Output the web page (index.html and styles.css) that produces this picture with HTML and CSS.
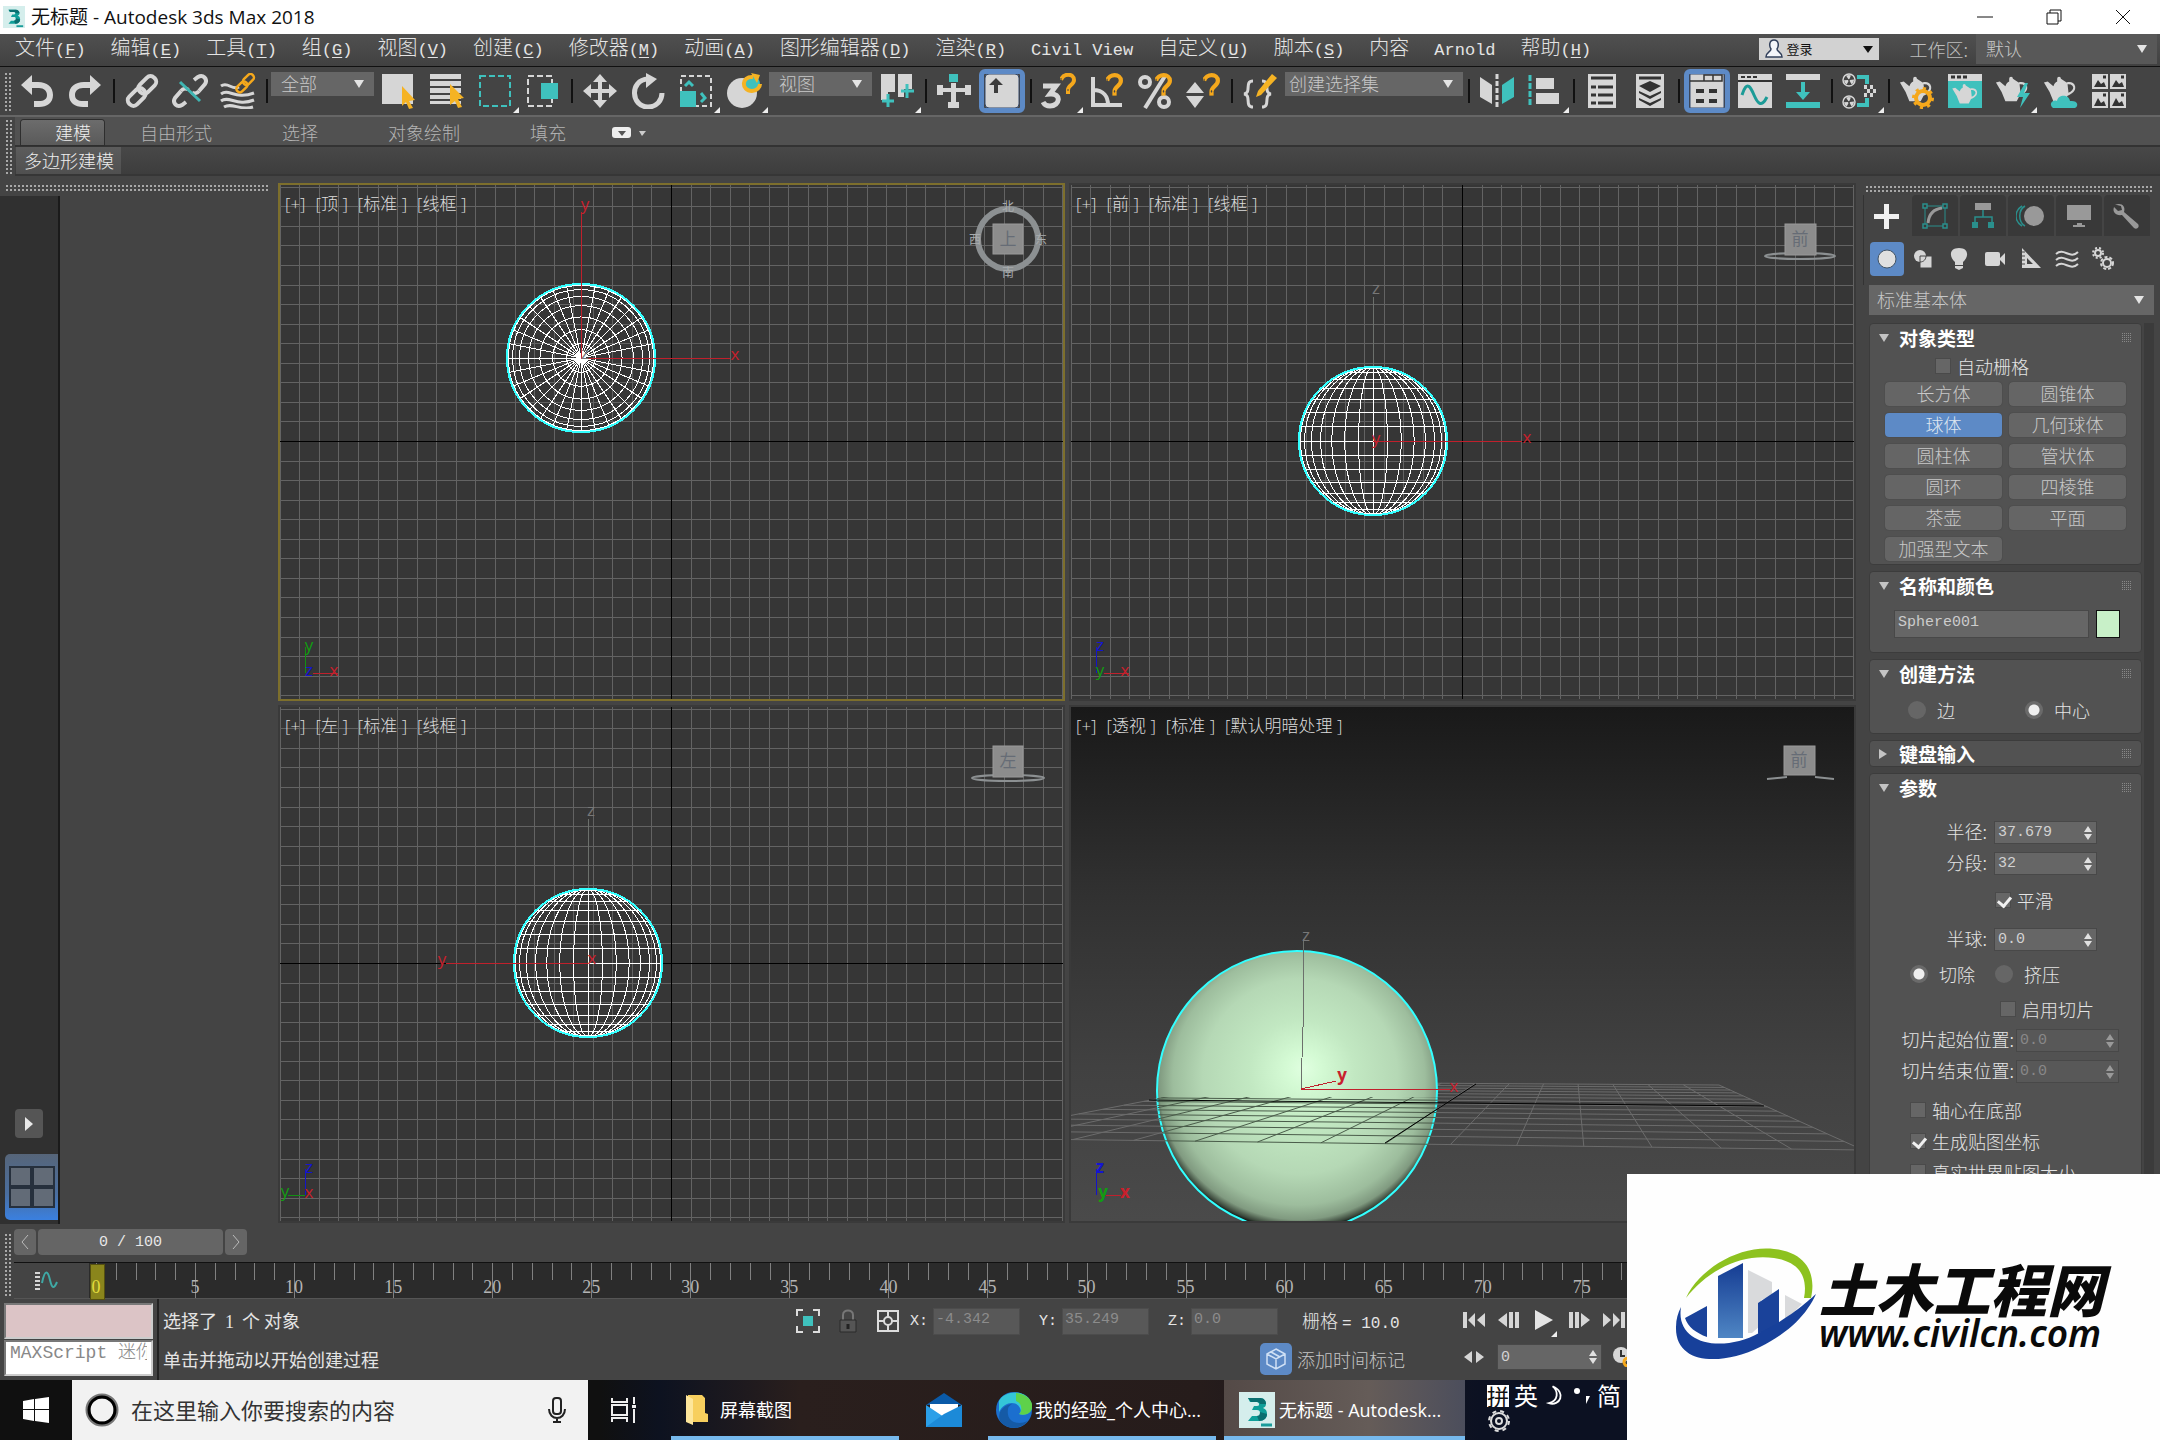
FILE: index.html
```html
<!DOCTYPE html>
<html lang="zh-CN">
<head>
<meta charset="utf-8">
<title>无标题 - Autodesk 3ds Max 2018</title>
<link rel="stylesheet" href="styles.css">
</head>
<body>
<svg class="defs" aria-hidden="true">
  <symbol id="spin" viewBox="0 0 8 16"><path d="M0 7l4-6 4 6zM0 9l4 6 4-6z" fill="currentColor"/></symbol>
  <symbol id="magnet" viewBox="0 0 16 22"><path d="M1 7C3 0 14 0 14 7c0 5-6 5-6 10" fill="none" stroke="#f5a81c" stroke-width="4"/><path d="M8 17v4" stroke="#f5a81c" stroke-width="4"/><path d="M1 8v-3M8 16v2" stroke="#444" stroke-width="1"/></symbol>
  <symbol id="chain" viewBox="0 0 36 36"><g fill="none" stroke="currentColor" stroke-width="4" transform="rotate(-45 18 18)"><rect x="0" y="13" width="20" height="11" rx="5"/><rect x="16" y="12" width="20" height="11" rx="5"/></g></symbol>
  <symbol id="teapot" viewBox="0 0 36 36"><path d="M15 6a2 2 0 1 1 4 0l6 4c4-1 8 0 9 4 1 5-3 8-8 10l-3 6H11L7 20 1 10l4-1 6 5c1-3 2-4 4-5zM26 12l1 9c4-2 5-4 5-6-1-3-4-3-6-3z" fill="#d6d6d6" fill-rule="evenodd"/></symbol>
  <symbol id="max" viewBox="0 0 36 36"><rect width="36" height="36" fill="#d5eeec"/><path d="M9 6h12c4 0 6 3 6 6 0 2-1 3-3 4 3 1 4 3 4 6 0 4-3 7-8 7H9l4-5h5c2 0 3-1 3-3s-1-3-3-3h-5l2-4h3c2 0 2-1 2-2s-1-2-2-2h-7z" fill="#0f9f99"/><path d="M9 6h12c4 0 6 3 6 6l-6 0c0-1-1-2-3-2h-6zM21 20l7 2c0 4-3 7-8 7l-2-5c2 0 3-1 3-4z" fill="#0a6f70"/><path d="M22 33h11" stroke="#1a9c9a" stroke-width="3"/></symbol>
</svg>

<header class="titlebar">
  <svg class="app-icon"><use href="#max"/></svg>
  <h1>无标题 - Autodesk 3ds Max 2018</h1>
  <div class="window-buttons">
    <button aria-label="最小化"><svg viewBox="0 0 18 18"><path d="M1 9h16" /></svg></button>
    <button aria-label="还原"><svg viewBox="0 0 18 18"><path d="M2 5h11v11H2zM5 5V2h11v11h-3"/></svg></button>
    <button aria-label="关闭"><svg viewBox="0 0 18 18"><path d="M2 2l14 14M16 2L2 16"/></svg></button>
  </div>
</header>

<nav class="menubar">
  <div class="menus">
    <a href="#">文件<span>(<u>F</u>)</span></a><a href="#">编辑<span>(<u>E</u>)</span></a><a href="#">工具<span>(<u>T</u>)</span></a><a href="#">组<span>(<u>G</u>)</span></a><a href="#">视图<span>(<u>V</u>)</span></a><a href="#">创建<span>(<u>C</u>)</span></a><a href="#">修改器<span>(<u>M</u>)</span></a><a href="#">动画<span>(<u>A</u>)</span></a><a href="#">图形编辑器<span>(<u>D</u>)</span></a><a href="#">渲染<span>(<u>R</u>)</span></a><a href="#"><span>Civil View</span></a><a href="#">自定义<span>(<u>U</u>)</span></a><a href="#">脚本<span>(<u>S</u>)</span></a><a href="#">内容</a><a href="#"><span>Arnold</span></a><a href="#">帮助<span>(<u>H</u>)</span></a>
  </div>
  <button class="signin"><svg viewBox="0 0 18 20"><path d="M9 1c5 0 5 6 3 9 0 3 5 3 5 8H1c0-5 5-5 5-8C4 7 4 1 9 1z" fill="#f4f6fa" stroke="#33415c" stroke-width="1.5"/></svg>登录<i></i></button>
  <label class="workspace" for="ws">工作区:</label>
  <span class="dd dd-ws"><select id="ws"><option>默认</option></select></span>
</nav>

<div class="toolbar">
  <i class="grip"></i>
  <button aria-label="撤消"><svg viewBox="0 0 36 36"><path d="M2 12L13 2v7h6c9 0 15 5 15 13s-6 12-14 12h-5v-6h5c5 0 8-2 8-6s-3-7-8-7h-7v7z" fill="#d6d6d6"/></svg></button>
  <button aria-label="重做"><svg viewBox="0 0 36 36"><path d="M34 12L23 2v7h-6C8 9 2 14 2 22s6 12 14 12h5v-6h-5c-5 0-8-2-8-6s3-7 8-7h7v7z" fill="#d6d6d6"/></svg></button>
  <i class="sep"></i>
  <button aria-label="选择并链接"><svg><use href="#chain"/></svg></button>
  <button aria-label="取消链接"><svg viewBox="0 0 36 36"><g fill="none" stroke="#d6d6d6" stroke-width="4"><path d="M22 7l4-3c5-3 10 2 7 7l-6 7M14 29l-4 3c-5 3-10-2-7-7l6-7"/><path d="M27 18c-2 3-6 3-7 1M9 18c2-3 6-3 7-1"/></g><path d="M8 9l20 19" stroke="#3fb5b2" stroke-width="3"/></svg></button>
  <button aria-label="绑定到空间扭曲"><svg viewBox="0 0 36 36"><path d="M1 13c7-5 11 5 18 1M1 21c8-6 14 6 33-1M1 28c8-6 16 6 33-1M4 34c8-5 16 4 29 0" fill="none" stroke="#d6d6d6" stroke-width="3"/><g transform="translate(14 -1) scale(.62)" color="#f5a81c"><use href="#chain" width="36" height="36"/></g></svg></button>
  <i class="sep"></i>
  <span class="dd dd-small"><select aria-label="选择过滤器"><option>全部</option></select></span>
  <button aria-label="选择对象"><svg viewBox="0 0 36 36"><path d="M1 1h31v30H1z" fill="#d6d6d6"/><path d="M21 13l13 14-6 1 4 7-4 1-3-7-4 4z" fill="#f5b324"/></svg></button>
  <button aria-label="按名称选择"><svg viewBox="0 0 36 36"><path d="M1 1h31v5H1zM1 8h31v5H1zM1 15h31v5H1zM1 22h31v4H1zM1 28h31v3H1z" fill="#d6d6d6"/><path d="M21 11l14 14-6 1 4 8-4 1-3-7-5 4z" fill="#f5b324"/></svg></button>
  <button class="fly" aria-label="矩形选择区域"><svg viewBox="0 0 36 36"><path d="M3 3h30v30H3z" fill="none" stroke="#3fc1bd" stroke-width="2" stroke-dasharray="6 3"/></svg></button>
  <button aria-label="窗口/交叉"><svg viewBox="0 0 36 36"><path d="M3 3h24v30H3z" fill="none" stroke="#d6d6d6" stroke-width="2" stroke-dasharray="6 3"/><path d="M16 10h17v16H16z" fill="#3fc1bd"/></svg></button>
  <i class="sep"></i>
  <button aria-label="选择并移动"><svg viewBox="0 0 36 36"><path d="M18 1l7 8h-5v7h7v-5l8 7-8 7v-5h-7v7h5l-7 8-7-8h5v-7H9v5l-8-7 8-7v5h7V9h-5z" fill="#d6d6d6"/></svg></button>
  <button aria-label="选择并旋转"><svg viewBox="0 0 36 36"><path d="M18 6C-1 7 1 34 18 34c9 0 14-7 14-14" fill="none" stroke="#d6d6d6" stroke-width="5"/><path d="M16 0l11 6-11 9z" fill="#d6d6d6"/></svg></button>
  <button class="fly" aria-label="选择并均匀缩放"><svg viewBox="0 0 36 36"><path d="M3 3h30v30H3z" fill="none" stroke="#d6d6d6" stroke-width="2" stroke-dasharray="5 3"/><path d="M2 18h16v16H2z" fill="#3fc1bd"/><path d="M7 13l4-4 4 4M23 20l4 5-4 4" fill="none" stroke="#3fc1bd" stroke-width="3"/></svg></button>
  <button class="fly" aria-label="选择并放置"><svg viewBox="0 0 36 36"><circle cx="16" cy="20" r="15" fill="#d6d6d6"/><circle cx="26" cy="11" r="8" fill="#3fc1bd"/><path d="M27 4c-12-1-12 14-1 14 5 0 8-4 8-7" fill="none" stroke="#f5b324" stroke-width="4"/><path d="M25 0l9 2-3 8z" fill="#f5b324"/></svg></button>
  <span class="dd dd-small"><select aria-label="参考坐标系"><option>视图</option></select></span>
  <button class="fly" aria-label="使用轴点中心"><svg viewBox="0 0 36 36"><path d="M2 1h14v18H9v8H2zM19 1h14v15h-8v8h-6z" fill="#d6d6d6"/><path d="M9 21v13M3 28h12M28 11v14M22 18h13" stroke="#3fc1bd" stroke-width="3"/></svg></button>
  <i class="sep"></i>
  <button aria-label="选择并操纵"><svg viewBox="0 0 36 36"><path d="M13 1h9v8h-9z" fill="#3fc1bd"/><path d="M15 10h5v5h9v-3h6v10h-6v-3h-9v10h3v6H12v-6h3V19H7v3H1V12h6v3h8z" fill="#d6d6d6"/></svg></button>
  <button class="on" aria-label="键盘快捷键覆盖切换"><svg viewBox="0 0 36 36"><rect x="1" y="1" width="34" height="34" rx="4" fill="#d6d6d6" stroke="#35496a"/><path d="M12 5l7 7h-5v8h-4v-8H5z" fill="#3c3c3c"/></svg></button>
  <i class="sep"></i>
  <button class="fly" aria-label="捕捉开关"><svg viewBox="0 0 36 36"><path d="M2 13h13l-6 8c12-1 10 12 0 12-4 0-6-2-7-4" fill="none" stroke="#d6d6d6" stroke-width="5"/><use href="#magnet" x="19" width="16" height="22"/></svg></button>
  <button aria-label="角度捕捉切换"><svg viewBox="0 0 36 36"><path d="M4 4v28h29M4 17c11 0 15 7 15 15" fill="none" stroke="#d6d6d6" stroke-width="4"/><use href="#magnet" x="17" width="17" height="24"/></svg></button>
  <button aria-label="百分比捕捉切换"><svg viewBox="0 0 36 36"><g fill="none" stroke="#d6d6d6" stroke-width="4"><circle cx="8" cy="9" r="5"/><circle cx="27" cy="29" r="5"/><path d="M28 3L8 35"/></g><use href="#magnet" x="18" width="17" height="24"/></svg></button>
  <button aria-label="微调器捕捉切换"><svg viewBox="0 0 36 36"><path d="M1 20l9-11 9 11zM1 23h18l-9 12z" fill="#d6d6d6"/><use href="#magnet" x="18" width="17" height="24"/></svg></button>
  <i class="sep"></i>
  <button aria-label="编辑命名选择集"><svg viewBox="0 0 36 36"><path d="M11 8c-9 0-1 12-9 13 8 1 0 13 9 13M20 8c9 0 1 12 9 13-8 1 0 13-9 13" fill="none" stroke="#d6d6d6" stroke-width="3"/><path d="M30 1l5 4-16 17-5 2 2-6z" fill="#f5b324"/></svg></button>
  <span class="dd dd-set"><select aria-label="命名选择集"><option>创建选择集</option></select></span>
  <i class="sep"></i>
  <button aria-label="镜像"><svg viewBox="0 0 36 36"><path d="M1 4l12 8v19L1 24z" fill="#d6d6d6"/><path d="M35 4l-12 8v19l12-7z" fill="#3fc1bd"/><path d="M18 1v34" stroke="#d6d6d6" stroke-width="3" stroke-dasharray="5 2"/></svg></button>
  <button class="fly" aria-label="对齐"><svg viewBox="0 0 36 36"><path d="M3 2v32" stroke="#3fc1bd" stroke-width="3" stroke-dasharray="6 2"/><path d="M9 5h18v11H9zM9 20h23v11H9z" fill="#d6d6d6"/></svg></button>
  <i class="sep"></i>
  <button aria-label="场景资源管理器"><svg viewBox="0 0 36 36"><path d="M4 1h28v34H4z" fill="#d6d6d6"/><path d="M7 5h22M7 14h5M14 14h15M7 22h5M14 22h15M7 30h5M14 30h15" stroke="#333" stroke-width="3"/></svg></button>
  <button aria-label="层资源管理器"><svg viewBox="0 0 36 36"><path d="M4 1h28v34H4z" fill="#d6d6d6"/><path d="M7 5h22" stroke="#333" stroke-width="3"/><path d="M18 8l11 5-11 6-11-6zM7 18l11 5 11-5v2l-11 6-11-6zM7 25l11 5 11-5v2l-11 6-11-6z" fill="#333"/></svg></button>
  <i class="sep"></i>
  <button class="on" aria-label="显示功能区"><svg viewBox="0 0 36 36"><path d="M1 1h34v34H1z" fill="#d6d6d6" stroke="#35496a"/><path d="M1 8h14V2h9v6M24 2h9v6H15" fill="none" stroke="#333" stroke-width="1.5"/><path d="M7 18h8M20 18h8M7 28h8M20 28h8" stroke="#333" stroke-width="4"/></svg></button>
  <button aria-label="曲线编辑器"><svg viewBox="0 0 36 36"><path d="M1 1h34v34H1z" fill="#d6d6d6"/><path d="M1 8h34M4 4h4M10 4h4M16 4h4" stroke="#333" stroke-width="2"/><path d="M5 22c5-16 9-7 12 0s7 14 13 2" fill="none" stroke="#1c9b97" stroke-width="3"/></svg></button>
  <button aria-label="图解视图"><svg viewBox="0 0 36 36"><path d="M1 1h34v6H1z" fill="#d6d6d6"/><path d="M1 29h34v6H1zM16 9h4v10h5l-7 8-7-8h5z" fill="#3fc1bd"/></svg></button>
  <i class="sep"></i>
  <button class="fly" aria-label="材质编辑器"><svg viewBox="0 0 36 36"><g fill="none" stroke="#d6d6d6"><g stroke-width="1.5"><circle cx="7" cy="7" r="6"/><circle cx="7" cy="29" r="6"/></g><g stroke-width="4" stroke-dasharray="3 3"><circle cx="7" cy="7" r="3"/><circle cx="7" cy="29" r="3"/><path d="M22 14h12M25 18h10M22 22h12"/></g></g><path d="M15 4h10v7M15 32h10v-7" fill="none" stroke="#3fc1bd" stroke-width="4"/></svg></button>
  <i class="sep"></i>
  <button aria-label="渲染设置"><svg viewBox="0 0 36 36"><use href="#teapot" width="34" height="34"/><circle cx="24" cy="25" r="7" fill="none" stroke="#f5a81c" stroke-width="4"/><circle cx="24" cy="25" r="9" fill="none" stroke="#f5a81c" stroke-width="4" stroke-dasharray="3 4"/></svg></button>
  <button aria-label="渲染帧窗口"><svg viewBox="0 0 36 36"><path d="M1 1h34v34H1z" fill="#3fc1bd"/><path d="M1 1h34v7H1z" fill="#d6d6d6"/><path d="M4 4h4M10 4h4M16 4h4" stroke="#333" stroke-width="3"/><use href="#teapot" x="4" y="8" width="28" height="27"/></svg></button>
  <button class="fly" aria-label="渲染产品"><svg viewBox="0 0 36 36"><use href="#teapot" width="34" height="34"/><path d="M30 10l-8 14h6l-3 11 10-15h-6l4-10z" fill="#3fc1bd"/></svg></button>
  <button aria-label="在云中渲染"><svg viewBox="0 0 36 36"><use href="#teapot" width="34" height="34"/><path d="M10 35c-5-4 0-9 4-7 1-7 12-7 13 0 8-1 9 5 5 7z" fill="#3fc1bd"/></svg></button>
  <button aria-label="打开 A360 库"><svg viewBox="0 0 36 36"><path d="M1 1h16v15H1zM19 1h16v15H19zM1 19h16v16H1zM19 19h16v16H19z" fill="#d6d6d6"/><path d="M3 14l4-7 3 4 3-2 2 5zM21 14l4-7 3 4 3-2 2 5zM3 33l4-8 3 5 3-2 2 5zM21 33l4-8 3 5 3-2 2 5z" fill="#333"/><path d="M12 4h3M30 4h3M12 22h3M30 22h3" stroke="#333" stroke-width="3"/></svg></button>
</div>

<section class="ribbon">
  <i class="grip"></i>
  <div class="ribbon-tabs">
    <button class="current">建模</button><button>自由形式</button><button>选择</button><button>对象绘制</button><button>填充</button>
    <button class="ribbon-min" aria-label="最小化功能区"><svg viewBox="0 0 34 14"><rect x="0" y="1" width="19" height="11" rx="3" fill="#eee"/><path d="M6 5h8l-4 5z" fill="#555"/><path d="M27 5h7l-4 5z" fill="#ccc"/></svg></button>
  </div>
  <div class="ribbon-panel"><button>多边形建模</button></div>
</section>

<main class="workspace-area">
  <aside class="layout-tabs">
    <button class="layout-play" aria-label="展开"><svg viewBox="0 0 10 16"><path d="M1 1l8 7-8 7z" fill="#e8e8e8"/></svg></button>
    <button class="layout-quad" aria-label="四视图"><svg viewBox="0 0 46 42"><path d="M1 1h21v19H1zM24 1h21v19H24zM1 22h21v19H1zM24 22h21v19H24z" fill="#626b77" stroke="#26303d" stroke-width="2"/></svg></button>
  </aside>
  <div class="dock"><i class="grip-h"></i></div>

  <div class="viewports">
    <section class="viewport active" data-view="top">
      <svg class="scene" viewBox="0 0 783 514" preserveAspectRatio="xMinYMin slice">
        <g class="grid"></g><g class="wire" data-cx="301" data-cy="173"></g>
        <path class="red" d="M301 173V27M301 173h149"/>
        <text class="t-red" x="305" y="25">y</text><text class="t-red" x="455" y="175">x</text><text class="t-gray" x="305" y="174">z</text>
        <path class="green" d="M25 488v-26"/><path class="red" d="M33 488h25"/>
        <text class="t-green" x="29" y="466">y</text><text class="t-blue" x="29" y="491">z</text><text class="t-red" x="54" y="491">x</text>
        <g class="cube"><circle cx="728" cy="54" r="30"/><rect x="713" y="39" width="30" height="30"/><text x="728" y="60">上</text></g>
        <g class="compass"><text x="728" y="26">北</text><text x="728" y="92">南</text><text x="695" y="59">西</text><text x="761" y="59">东</text></g>
      </svg>
      <div class="vp-labels"><button>[+]</button><button>[顶 ]</button><button>[标准 ]</button><button>[线框 ]</button></div>
    </section>
    <section class="viewport" data-view="front">
      <svg class="scene" viewBox="0 0 783 514" preserveAspectRatio="xMinYMin slice">
        <g class="grid"></g><path class="gray" d="M302 256V112"/><g class="wire" data-cx="302" data-cy="256"></g>
        <path class="red" d="M302 256h149"/>
        <text class="t-gray" x="305" y="109">z</text><text class="t-red" x="305" y="259">y</text><text class="t-red" x="456" y="258">x</text>
        <path class="blue" d="M25 488v-26"/><path class="red" d="M33 488h25"/>
        <text class="t-blue" x="29" y="466">z</text><text class="t-green" x="29" y="491">y</text><text class="t-red" x="54" y="491">x</text>
        <g class="cube"><ellipse cx="729" cy="71" rx="35" ry="3"/><rect x="714" y="39" width="31" height="31"/><text x="729" y="60">前</text></g>
      </svg>
      <div class="vp-labels"><button>[+]</button><button>[前 ]</button><button>[标准 ]</button><button>[线框 ]</button></div>
    </section>
    <section class="viewport" data-view="left">
      <svg class="scene" viewBox="0 0 783 514" preserveAspectRatio="xMinYMin slice">
        <g class="grid"></g><path class="gray" d="M308 256V112"/><g class="wire" data-cx="308" data-cy="256"></g>
        <path class="red" d="M308 256H166"/>
        <text class="t-gray" x="311" y="109">z</text><text class="t-red" x="162" y="258">y</text><text class="t-red" x="312" y="257">x</text>
        <path class="blue" d="M25 488v-26"/><path class="green" d="M8 488h17"/>
        <text class="t-blue" x="29" y="466">z</text><text class="t-green" x="5" y="490">y</text><text class="t-red" x="29" y="491">x</text>
        <g class="cube"><ellipse cx="728" cy="71" rx="36" ry="3"/><rect x="713" y="39" width="30" height="31"/><text x="728" y="60">左</text></g>
      </svg>
      <div class="vp-labels"><button>[+]</button><button>[左 ]</button><button>[标准 ]</button><button>[线框 ]</button></div>
    </section>
    <section class="viewport shaded" data-view="perspective">
      <svg class="scene" viewBox="0 0 783 514" preserveAspectRatio="xMinYMin slice">
        <defs>
          <radialGradient id="ball" gradientUnits="userSpaceOnUse" cx="227" cy="374" r="150" fx="233" fy="361">
            <stop offset="0" stop-color="#e0ffe0"/><stop offset=".12" stop-color="#d4fad4"/><stop offset=".35" stop-color="#c2e8c2"/><stop offset=".65" stop-color="#b5d8b5"/><stop offset=".84" stop-color="#9dbd9d"/><stop offset=".93" stop-color="#809a80"/><stop offset=".975" stop-color="#3a463a"/><stop offset="1" stop-color="#000"/>
          </radialGradient>
          <clipPath id="ball-front"><path d="M86 390h281c-3 80-60 134-140 134S88 470 86 390z"/></clipPath>
        </defs>
        <g class="floor"></g>
        <circle cx="226" cy="384" r="140" fill="url(#ball)" stroke="#3ff" stroke-width="2"/>
        <g class="floor floor-front" clip-path="url(#ball-front)"></g>
        <path class="axis-line" d="M78 393L693 399M405 377L314 436"/>
        <path class="gray" d="M232 232V320L230 382"/><path class="red" d="M265 374l-35 8 149 1"/>
        <text class="t-gray" x="235" y="234">z</text><text class="t-red bold" x="271" y="374">y</text><text class="t-red" x="383" y="385">x</text>
        <path class="blue" d="M25 488v-26"/><path class="red" d="M33 488h17"/>
        <text class="t-blue bold" x="29" y="466">z</text><text class="t-green bold" x="32" y="491">y</text><text class="t-red bold" x="54" y="491">x</text>
        <g class="cube"><path d="M696 72l20-2M744 70l19 2"/><rect x="713" y="39" width="31" height="29"/><text x="728" y="59">前</text></g>
      </svg>
      <div class="vp-labels"><button>[+]</button><button>[透视 ]</button><button>[标准 ]</button><button>[默认明暗处理 ]</button></div>
    </section>
  </div>

  <aside class="command-panel">
    <i class="grip-h"></i>
    <div class="panel-tabs">
      <button class="current" aria-label="创建"><svg viewBox="0 0 30 30"><path d="M12 3h5v10h10v5H17v10h-5V18H2v-5h10z" fill="#f0f0f0"/></svg></button>
      <button aria-label="修改"><svg viewBox="0 0 30 30"><path d="M5 5h20v20H5z" fill="none" stroke="#2a8f8c"/><path d="M3 3h4v4H3zM23 3h4v4h-4zM3 23h4v4H3zM23 23h4v4h-4z" fill="#383838" stroke="#2a8f8c" stroke-width="1.5"/><path d="M8 22C9 12 14 8 22 7" fill="none" stroke="#999" stroke-width="3"/></svg></button>
      <button aria-label="层次"><svg viewBox="0 0 30 30"><path d="M7 2h16v7H7z" fill="#999"/><path d="M15 9v7M7 21v-5h17v5" fill="none" stroke="#2a8f8c" stroke-width="1.5"/><path d="M4 21h6v6H4zM20 21h6v6h-6z" fill="#2a8f8c"/></svg></button>
      <button aria-label="运动"><svg viewBox="0 0 30 30"><circle cx="18" cy="15" r="10" fill="#999"/><path d="M9 5C2 9 2 21 9 25M6 5C-2 10-2 20 6 25" fill="none" stroke="#2a8f8c" stroke-width="1.5"/></svg></button>
      <button aria-label="显示"><svg viewBox="0 0 30 30"><path d="M3 4h24v15H3zM13 22h5v2h3v2H9v-2h4z" fill="#999"/></svg></button>
      <button aria-label="实用程序"><svg viewBox="0 0 30 30"><path d="M3 4c6-3 11 1 9 7l14 12c2 3-1 6-4 4L10 14c-6 1-10-3-8-8l4 4 4-1-1-4-4-1z" fill="#999"/></svg></button>
    </div>
    <div class="panel-kinds">
      <button class="on" aria-label="几何体"><svg viewBox="0 0 24 24"><circle cx="12" cy="12" r="9" fill="#e0e0e0" stroke="#456"/></svg></button>
      <button aria-label="图形"><svg viewBox="0 0 24 24"><circle cx="9" cy="9" r="6" fill="#d6d6d6"/><path d="M9 9h12v12H9z" fill="#d6d6d6" stroke="#444"/><path d="M9 15c4 0 6-3 6-6" fill="none" stroke="#444"/></svg></button>
      <button aria-label="灯光"><svg viewBox="0 0 24 24"><path d="M12 1c10 0 10 9 4 14v3H8v-3C2 10 2 1 12 1zM8 19h8v2l-4 2-4-2z" fill="#d6d6d6"/></svg></button>
      <button aria-label="摄影机"><svg viewBox="0 0 24 24"><rect x="2" y="5" width="15" height="14" rx="2" fill="#d6d6d6"/><path d="M17 11l5-5v12l-5-5z" fill="#d6d6d6"/></svg></button>
      <button aria-label="辅助对象"><svg viewBox="0 0 24 24"><path d="M3 1l19 20H3zM8 11v6h6z" fill="#d6d6d6" fill-rule="evenodd"/><path d="M3 5h3M3 9h3M3 13h3M3 17h3" stroke="#444"/></svg></button>
      <button aria-label="空间扭曲"><svg viewBox="0 0 24 24"><path d="M1 7c8-7 14 6 22-2M1 13c8-7 14 6 22-2M1 19c8-7 14 6 22-2" fill="none" stroke="#d6d6d6" stroke-width="2"/></svg></button>
      <button aria-label="系统"><svg viewBox="0 0 24 24"><g fill="none" stroke="#d6d6d6"><circle cx="7" cy="6" r="3" stroke-width="2"/><circle cx="7" cy="6" r="5" stroke-width="2" stroke-dasharray="2 2"/><circle cx="16" cy="16" r="4" stroke-width="2"/><circle cx="16" cy="16" r="6" stroke-width="2" stroke-dasharray="3 2"/></g></svg></button>
    </div>
    <span class="dd dd-prim"><select aria-label="对象类别"><option>标准基本体</option></select></span>

    <div class="rollouts">
      <section class="rollout">
        <h2>对象类型</h2>
        <label class="check autogrid"><input type="checkbox">自动栅格</label>
        <div class="type-grid"><button>长方体</button><button>圆锥体</button><button class="on">球体</button><button>几何球体</button><button>圆柱体</button><button>管状体</button><button>圆环</button><button>四棱锥</button><button>茶壶</button><button>平面</button><button>加强型文本</button></div>
      </section>
      <section class="rollout">
        <h2>名称和颜色</h2>
        <div class="name-row"><input type="text" aria-label="名称" value="Sphere001"><button aria-label="对象颜色"></button></div>
      </section>
      <section class="rollout">
        <h2>创建方法</h2>
        <div class="method-row"><label class="radio"><input type="radio" name="method">边</label><label class="radio"><input type="radio" name="method" checked>中心</label></div>
      </section>
      <section class="rollout closed"><h2>键盘输入</h2></section>
      <section class="rollout params">
        <h2>参数</h2>
        <div class="field first"><label for="radius">半径:</label><span class="num"><input id="radius" value="37.679"><svg><use href="#spin"/></svg></span></div>
        <div class="field"><label for="segs">分段:</label><span class="num"><input id="segs" value="32"><svg><use href="#spin"/></svg></span></div>
        <label class="check smooth"><input type="checkbox" checked>平滑</label>
        <div class="field"><label for="hemi">半球:</label><span class="num"><input id="hemi" value="0.0"><svg><use href="#spin"/></svg></span></div>
        <div class="chop-row"><label class="radio"><input type="radio" name="chop" checked>切除</label><label class="radio"><input type="radio" name="chop">挤压</label></div>
        <label class="check slice-on"><input type="checkbox">启用切片</label>
        <div class="field slice"><label for="from">切片起始位置:</label><span class="num"><input id="from" value="0.0" disabled><svg><use href="#spin"/></svg></span></div>
        <div class="field slice"><label for="to">切片结束位置:</label><span class="num"><input id="to" value="0.0" disabled><svg><use href="#spin"/></svg></span></div>
        <label class="check map base"><input type="checkbox">轴心在底部</label>
        <label class="check map"><input type="checkbox" checked>生成贴图坐标</label>
        <label class="check map"><input type="checkbox">真实世界贴图大小</label>
      </section>
    </div>
  </aside>
</main>

<div class="trackbar">
  <i class="grip"></i>
  <div class="time-slider"><button aria-label="上一帧"><svg viewBox="0 0 10 20"><path d="M8 3L2 10l6 7" fill="none" stroke="#bbb"/></svg></button><button class="thumb">0 / 100</button><button aria-label="下一帧"><svg viewBox="0 0 10 20"><path d="M2 3l6 7-6 7" fill="none" stroke="#bbb"/></svg></button></div>
  <div class="timeline">
    <button class="mini-curve" aria-label="迷你曲线编辑器"><svg viewBox="0 0 24 20"><path d="M1 2h5M1 6h5M1 10h5M1 14h5M1 18h5" stroke="#d6d6d6" stroke-width="2"/><path d="M8 12C11-3 14 0 16 9s4 9 7 2" fill="none" stroke="#3fa9a5" stroke-width="2"/></svg></button>
    <div class="frames"></div>
  </div>
</div>

<footer class="status">
  <div class="macro"><input class="pink" aria-label="宏录制器"><input aria-label="MAXScript 迷你侦听器" placeholder="MAXScript 迷你"></div>
  <div class="status-rows">
    <div class="status-row">
      <p>选择了 <span>1</span> 个 对象</p>
      <div class="coords">
        <button aria-label="孤立当前选择"><svg viewBox="0 0 24 24"><path d="M1 7V1h6M17 1h6v6M23 17v6h-6M7 23H1v-6" fill="none" stroke="#ddd" stroke-width="2"/><path d="M7 7h10v10H7z" fill="#3fc1bd"/></svg></button>
        <button aria-label="选择锁定"><svg viewBox="0 0 24 24"><path d="M7 11V6c0-6 10-6 10 0v5" fill="none" stroke="#777" stroke-width="2"/><path d="M4 11h16v12H4z" fill="#555" stroke="#2b2b2b"/><path d="M12 15v5" stroke="#222" stroke-width="3"/></svg></button>
        <button aria-label="绝对模式"><svg viewBox="0 0 24 24"><path d="M2 2h20v20H2zM12 2v20M2 12h20" fill="none" stroke="#ddd" stroke-width="2"/><circle cx="12" cy="12" r="4" fill="#444" stroke="#ddd" stroke-width="2"/></svg></button>
        <label>X:<input value="-4.342" disabled></label><label>Y:<input value="35.249" disabled></label><label>Z:<input value="0.0" disabled></label>
        <span class="grid-size">栅格 <span>= 10.0</span></span>
      </div>
    </div>
    <div class="status-row">
      <p>单击并拖动以开始创建过程</p>
      <div class="tag"><button aria-label="时间标记"><svg viewBox="0 0 24 24"><path d="M12 2l9 5v10l-9 5-9-5V7zM3 7l9 5 9-5M12 12v10M7 5l9 5" fill="none" stroke="#cfe0f5" stroke-width="1.5"/></svg></button>添加时间标记</div>
    </div>
  </div>
  <div class="playback">
    <div class="play-row">
      <button aria-label="转至开头"><svg viewBox="0 0 24 20"><path d="M1 2h4v16H1zM13 3v14l-7-7zM23 3v14l-8-7z" fill="#d6d6d6"/></svg></button><button aria-label="上一帧"><svg viewBox="0 0 24 20"><path d="M10 3v14l-9-7zM12 2h4v16h-4zM18 2h4v16h-4z" fill="#d6d6d6"/></svg></button><button class="fly" aria-label="播放动画"><svg viewBox="0 0 24 20"><path d="M3 0l18 10L3 20z" fill="#e4e4e4"/></svg></button><button aria-label="下一帧"><svg viewBox="0 0 24 20"><path d="M14 3v14l9-7zM2 2h4v16H2zM8 2h4v16H8z" fill="#d6d6d6"/></svg></button><button aria-label="转至结尾"><svg viewBox="0 0 24 20"><path d="M1 3v14l8-7zM11 3v14l7-7zM19 2h4v16h-4z" fill="#d6d6d6"/></svg></button>
    </div>
    <div class="play-row">
      <button aria-label="关键点模式"><svg viewBox="0 0 24 20"><path d="M10 4v12l-8-6zM14 4v12l8-6z" fill="#d6d6d6"/></svg></button><span class="num"><input aria-label="当前帧" value="0"><svg><use href="#spin"/></svg></span><button aria-label="时间配置"><svg viewBox="0 0 24 20"><circle cx="11" cy="8" r="8" fill="#d6d6d6"/><path d="M11 3v6h4" fill="none" stroke="#333" stroke-width="2"/><circle cx="18" cy="15" r="4" fill="none" stroke="#f5a81c" stroke-width="3"/></svg></button>
    </div>
  </div>
</footer>

<nav class="taskbar">
  <button class="start" aria-label="开始"><svg viewBox="0 0 26 26"><path d="M0 4l11-2v10H0zM12 2l14-2v12H12zM0 13h11v11L0 22zM12 13h14v13l-14-2z" fill="#fff"/></svg></button>
  <label class="search"><svg viewBox="0 0 34 34"><circle cx="17" cy="17" r="14" fill="none" stroke="#777" stroke-width="5"/><circle cx="17" cy="17" r="13" fill="none" stroke="#000" stroke-width="3"/></svg><input aria-label="搜索" placeholder="在这里输入你要搜索的内容"><svg class="mic" viewBox="0 0 20 26"><rect x="6" y="1" width="8" height="16" rx="3" fill="none" stroke="#222" stroke-width="2"/><path d="M2 12c0 12 16 12 16 0M10 21v4M6 25h8" fill="none" stroke="#222" stroke-width="2"/></svg></label>
  <button class="task-view" aria-label="任务视图"><svg viewBox="0 0 26 26"><path d="M1 1v4h15V1M1 8h15v10H1zM1 25v-4h15v4M23 0v7M23 12v14" fill="none" stroke="#eee" stroke-width="2"/><path d="M21 8h4v3h-4z" fill="#eee"/></svg></button>
  <button class="task run folder"><svg viewBox="0 0 22 32"><path d="M2 1h14l3 3v15l3 1v8H2z" fill="#f7cf5e"/><path d="M0 1l7 4v26L0 28z" fill="#fde69b"/></svg>屏幕截图</button>
  <button class="task mail" aria-label="邮件"><svg viewBox="0 0 36 36"><path d="M0 13L18 1l18 12z" fill="#0a5aa8"/><path d="M4 12h28v12H4z" fill="#fff"/><path d="M0 13l18 12 18-12v22H0z" fill="#2b9fe8"/><path d="M0 35l18-13 18-9v22z" fill="#1c8ad8"/></svg></button>
  <button class="task run edge"><svg viewBox="0 0 36 36"><circle cx="18" cy="18" r="18" fill="#1b6fcf"/><path d="M3 9C9-3 34-3 36 14c0 8-8 10-13 8 0 0 3-2 1-6C20 8 8 10 3 20z" fill="#34c6d8"/><path d="M20 1c12 1 17 9 16 14 0 7-8 9-13 7 4-3 3-11-3-13z" fill="#5ed14a"/><path d="M12 17c-2 12 8 17 20 12-7 9-22 9-28 0C1 22 6 13 16 12c-2 1-4 3-4 5z" fill="#155aa6"/></svg>我的经验_个人中心...</button>
  <button class="task run max current"><svg><use href="#max"/></svg>无标题 - Autodesk...</button>
  <div class="tray">
    <div><span class="ime">拼</span><span>英</span><svg viewBox="0 0 20 20"><path d="M8 2c5 4 5 12-3 14 9 3 15-9 3-14z" fill="none" stroke="#fff" stroke-width="1.5"/></svg><svg class="dots" viewBox="0 0 20 20"><circle cx="5" cy="5" r="3" fill="#fff"/><path d="M14 10h4l-4 8z" fill="#fff"/></svg><span>简</span></div>
    <svg viewBox="0 0 24 24"><circle cx="12" cy="12" r="3" fill="none" stroke="#ddd" stroke-width="2"/><circle cx="12" cy="12" r="8" fill="none" stroke="#ddd" stroke-width="2"/><circle cx="12" cy="12" r="10" fill="none" stroke="#ddd" stroke-width="2" stroke-dasharray="4 4"/></svg>
  </div>
</nav>

<a class="brand" href="#">
  <svg viewBox="0 0 144 116">
    <defs><linearGradient id="tower" x1="0" y1="0" x2="0" y2="1"><stop offset="0" stop-color="#153c93"/><stop offset="1" stop-color="#4f86c4"/></linearGradient></defs>
    <path d="M73 22l24 12v14l-11 4v25l-9 8h-4zM110 47l17 9-17 17z" fill="#d9dadc"/>
    <path d="M43 28l25-13v75H43z" fill="url(#tower)"/><path d="M10 70l22-12v31C21 85 13 79 10 70zM83 55l21-14v36l-21 9z" fill="#1a429a"/>
    <path d="M11 50C25 20 65-3 99 1c30 3 43 22 37 49h-7c4-21-4-36-30-40C65 5 31 24 11 50z" fill="#8dc21f"/>
    <path d="M6 59c-6 38 42 46 78 26 29-14 48-31 57-39-9 20-26 38-56 53C47 118 0 117 1 79c0-8 2-14 5-20z" fill="#17409a"/>
  </svg>
  <span class="brand-text"><strong>土木工程网</strong><span>www.civilcn.com</span></span>
</a>
<script src="scene.js"></script>
</body>
</html>
```

FILE: styles.css
```css
* { box-sizing: border-box; }
body {
  margin: 0;
  min-height: 100vh;
  display: flex;
  flex-direction: column;
  background: #444;
  color: #e4e4e4;
  font: 300 18px/20px "Noto Sans CJK SC", sans-serif;
  overflow-x: hidden;
}
button, input, select { font: inherit; color: inherit; border: 0; padding: 0; margin: 0; background: none; border-radius: 0; }
button { display: flex; align-items: center; justify-content: center; white-space: nowrap; }
a { color: inherit; text-decoration: none; }
h1, h2, p { margin: 0; font-size: 18px; font-weight: 400; }
svg { display: block; flex: none; }
.defs { position: absolute; width: 0; height: 0; }

/* dotted drag handles */
.grip { width: 8px; background: conic-gradient(#a8a8a8 25%, transparent 0) 0 0 / 4px 4px; align-self: stretch; flex: none; }
.grip-h { display: block; height: 6px; background: conic-gradient(#a8a8a8 25%, transparent 0) 0 0 / 4px 4px; }

/* drop-downs */
.dd { position: relative; display: flex; background: #666; }
.dd select { appearance: none; width: 100%; padding: 0 10px 2px; color: #c8c8c8; outline: 0; }
.dd::after { content: ""; position: absolute; right: 10px; top: 50%; margin-top: -4px; border: 5px solid transparent; border-top: 8px solid #e4e4e4; border-bottom: 0; pointer-events: none; }

.titlebar { display: flex; align-items: center; height: 34px; background: #fff; color: #111; padding: 0 3px; }
.titlebar h1 { flex: 1; font-size: 19px; font-family: "Open Sans", "Noto Sans CJK SC", sans-serif; }
.app-icon { width: 22px; height: 22px; margin-right: 6px; }
.window-buttons { display: flex; }
.window-buttons button { width: 69px; height: 34px; }
.window-buttons svg { width: 18px; height: 18px; fill: none; stroke: #111; }

.menubar { display: flex; align-items: center; height: 33px; background: linear-gradient(#505050, #414141); border-bottom: 1px solid #111; padding: 0 3px 2px 15px; }
.menus { display: flex; gap: 25px; flex: 1; font-size: 20px; line-height: 26px; padding-bottom: 4px; }
.menus a { white-space: nowrap; }
.menus span { font: 17px "Liberation Mono", monospace; }
.menus u { text-underline-offset: 2px; }
.signin { width: 120px; height: 22px; background: #d2d2d2; color: #111; font-size: 13px; font-weight: 400; padding: 0 6px; gap: 4px; }
.signin svg { width: 18px; height: 20px; }
.signin i { margin-left: auto; border: 5px solid transparent; border-top: 7px solid #111; border-bottom: 0; }
.workspace { margin: 0 8px 0 31px; color: #bdbdbd; }
.dd-ws { width: 181px; height: 30px; background: #585858; }

.toolbar { display: flex; align-items: center; height: 48px; padding-left: 3px; background: #444; }
.toolbar .grip { margin: 6px 2px 4px 0; }
.toolbar button { position: relative; width: 48px; height: 46px; flex: none; color: #d6d6d6; }
.toolbar button svg { width: 36px; height: 36px; }
.toolbar .sep { flex: none; width: 9px; height: 24px; background: linear-gradient(#111, #111) 4px 0 / 2px 24px no-repeat; }
.toolbar .dd { height: 24px; margin: 0 1px 14px 0; }
.toolbar button + .dd { margin-left: 1px; }
.dd-small { width: 103px; }
.dd-set { width: 178px; }
.dd-set select { padding-left: 4px; }
.fly::after { content: ""; position: absolute; right: 0; bottom: 1px; border: 3px solid transparent; border-right-color: #eee; border-bottom-color: #eee; }
.toolbar .on::before { content: ""; position: absolute; inset: 1px; border: 5px solid #5d8ac6; border-radius: 6px; }

.ribbon { position: relative; border-top: 2px solid #666; }
.ribbon .grip { position: absolute; left: 4px; top: 3px; height: 54px; }
.ribbon-tabs { display: flex; align-items: stretch; height: 30px; padding: 3px 0 0 6px; background: #515151; border-bottom: 2px solid #333; margin-left: 15px; }
.ribbon-tabs button { padding: 0 34px 2px 36px; color: #b4b4b4; }
.ribbon-tabs .current { padding: 0 13px 2px 34px; background: linear-gradient(#6c6c6c, #5a5a5a); box-shadow: 0 0 0 1px #2e2e2e; border-radius: 3px 3px 0 0; color: #eee; }
.ribbon-tabs .ribbon-min { padding: 0 12px; }
.ribbon-min svg { width: 34px; height: 14px; }
.ribbon-panel { display: flex; height: 29px; padding-left: 1px; margin-left: 15px; background: linear-gradient(#484848, #3d3d3d); border-bottom: 2px solid #363636; }
.ribbon-panel button { background: linear-gradient(#5c5c5c, #505050); padding: 0 7px 2px 8px; color: #eee; }

.workspace-area { flex: 1; display: flex; min-height: 0; }
.layout-tabs { width: 60px; margin-top: 20px; background: #303030; border-right: 2px solid #1a1a1a; display: flex; flex-direction: column; justify-content: flex-end; gap: 16px; padding: 0 0 4px 5px; }
.layout-play { width: 28px; height: 29px; margin-left: 10px; background: #555; border-radius: 4px; }
.layout-play svg { width: 10px; height: 16px; }
.layout-quad { height: 66px; background: linear-gradient(#566579, #4a6e9f 60%, #3a80e0); border-radius: 5px 0 0 5px; }
.layout-quad svg { width: 46px; height: 42px; }
.dock { width: 218px; padding: 9px 9px 0 0; }
.dock .grip-h { margin-left: -56px; }

.viewports { flex: 1; min-width: 0; display: grid; grid-template-columns: 1fr 1fr; grid-template-rows: 1fr 1fr; gap: 4px; padding: 7px 0 1px; }
.viewport { position: relative; border: 2px solid #3a3a3a; background: #363636; overflow: hidden; min-height: 500px; }
.viewport.active { border-color: #7d6f2c; }
.viewport.shaded { background: linear-gradient(#191919, #303030 35%, #414141 70%, #4a4a4a); }
.scene { position: absolute; inset: 0; width: 100%; height: 100%; font: 17px "Open Sans", "Noto Sans CJK SC", sans-serif; text-anchor: middle; }
.vp-labels { position: relative; display: flex; gap: 10px; padding: 9px 5px; font-family: "Open Sans", "Noto Sans CJK SC", sans-serif; font-size: 17px; color: #dcdcdc; }
.grid path, .red, .green, .blue, .gray { fill: none; stroke-width: 1; shape-rendering: crispEdges; }
.grid path { stroke: #636363; }
.grid .origin { stroke: #000; }
.wire path, .wire ellipse, .wire circle { fill: none; stroke: #fff; stroke-width: 1; shape-rendering: crispEdges; }
.wire .outline { stroke: #3ff; stroke-width: 2; }
.floor path { stroke: #6c6c6c; fill: none; }
.floor-front path { stroke: #4a5c4a; }
.axis-line { stroke: #000; fill: none; stroke-width: 1; }
.red { stroke: #c0202c; }
.green { stroke: #129012; }
.blue { stroke: #1414c8; }
.gray { stroke: #6c706c; }
.t-red { fill: #c8202c; }
.t-green { fill: #129c12; }
.t-blue { fill: #1414d2; }
.t-gray { fill: #777; }
.bold { font-weight: 700; }
.cube { fill: none; stroke: #8c9092; stroke-width: 2; }
.cube circle { stroke-width: 6; }
.cube rect { fill: #8c8c8c; stroke: #999; stroke-width: 1; }
.cube text { fill: #666c76; stroke: none; }
.compass { fill: #a8acae; font-size: 12px; }

.command-panel { width: 304px; padding: 10px 6px 0 8px; display: flex; flex-direction: column; }
.command-panel > .grip-h { margin-bottom: 3px; flex: none; }
.panel-tabs { display: flex; gap: 2px; height: 41px; border-left: 1px solid #333; margin-left: -1px; }
.panel-tabs button { width: 46px; height: 41px; background: #393939; border-radius: 4px 4px 0 0; }
.panel-tabs .current { background: none; }
.panel-tabs svg { width: 30px; height: 30px; }
.panel-kinds { display: flex; gap: 2px; padding: 6px 0 9px 6px; border-left: 1px solid #333; margin-left: -1px; }
.panel-kinds button { width: 34px; height: 34px; border-radius: 4px; }
.panel-kinds .on { background: #5d8ac6; }
.panel-kinds svg { width: 24px; height: 24px; }
.dd-prim { height: 30px; margin-left: 5px; }
.dd-prim select { padding-left: 8px; }
.rollouts { flex: 1; margin-top: 8px; padding: 0 12px 0 5px; display: flex; flex-direction: column; gap: 6px; background: linear-gradient(90deg, transparent 280px, #3b3b3b 280px); }
.rollout { background: #525252; border: 1px solid #3c3c3c; border-radius: 4px; padding-bottom: 3px; }
.rollout h2 { display: flex; align-items: center; height: 27px; font-size: 19px; font-weight: 700; color: #fff; padding: 0 10px 0 9px; }
.rollout h2::before { content: ""; border: 5px solid transparent; border-top: 8px solid #c4c4c4; border-bottom: 0; margin-right: 10px; }
.rollout.closed h2::before { border: 5px solid transparent; border-left: 8px solid #c4c4c4; border-right: 0; margin-right: 12px; }
.rollout h2::after { content: ""; margin-left: auto; width: 10px; height: 10px; background: conic-gradient(#888 25%, transparent 0) 0 0 / 2px 2px; }
.rollout.closed { padding: 0; }
.rollout.closed h2 { height: 25px; }
.check, .radio { display: flex; align-items: center; gap: 6px; height: 20px; }
.check input { appearance: none; width: 16px; height: 16px; background: #666; border: 1px solid #4a4a4a; position: relative; }
.check input:checked::after { content: ""; position: absolute; left: 4px; top: 1px; width: 6px; height: 10px; border: solid #f0f0f0; border-width: 0 3px 3px 0; transform: rotate(40deg); }
.radio { gap: 11px; }
.radio input { appearance: none; width: 18px; height: 18px; border-radius: 50%; background: #666; }
.radio input:checked { background: radial-gradient(circle, #eee 5px, #6a6a6a 6px); }
.autogrid { margin: 5px 0 6px 65px; }
.type-grid { display: grid; grid-template-columns: 1fr 1fr; gap: 7px; padding: 0 15px; }
.type-grid button { height: 24px; padding-bottom: 2px; background: #656565; border-radius: 4px; color: #c8c8c8; box-shadow: 0 0 1px #333; }
.type-grid .on { background: #5d8ac6; color: #dfe6f0; }
.name-row { display: flex; gap: 7px; padding: 11px 21px 11px 24px; }
.name-row input { flex: 1; min-width: 0; height: 28px; background: #666; border: 1px solid #484848; padding: 0 3px 3px; font: 15px "Liberation Mono", monospace; color: #ccc; }
.name-row button { width: 24px; height: 28px; background: #c8f0c8; border: 1px solid #111; }
.method-row { display: grid; grid-template-columns: 117px 1fr; padding: 13px 0 10px 38px; }
.params { flex: 1; }
.field { display: flex; align-items: center; height: 23px; margin-bottom: 8px; padding-right: 44px; justify-content: flex-end; gap: 7px; }
.field label { padding-bottom: 3px; }
.field.first { margin-top: 20px; }
.num { display: flex; align-items: center; width: 103px; height: 23px; background: #666; border: 1px solid #484848; padding: 0 4px 0 3px; color: #e0e0e0; }
.num input { flex: 1; min-width: 0; width: 10px; font: 15px "Liberation Mono", monospace; color: #d2d2d2; }
.num svg { width: 8px; height: 16px; }
.smooth { margin: 15px 0 18px 125px; }
.chop-row { display: grid; grid-template-columns: 85px 1fr; padding: 5px 0 0 40px; }
.slice-on { margin: 15px 0 10px 130px; }
.slice { padding-right: 22px; gap: 2px; }
.slice .num { background: #585858; color: #999; }
.slice .num input { color: #888; }
.map { margin: 0 0 11px 40px; }
.base { margin-top: 17px; }
.map:last-child { margin-bottom: 0; }

.trackbar { position: relative; padding: 5px 0 0 14px; background: #444; }
.trackbar .grip { position: absolute; left: 3px; top: 10px; height: 62px; }
.time-slider { display: flex; gap: 2px; height: 26px; margin-bottom: 7px; font: 15px "Liberation Mono", monospace; }
.time-slider button { width: 22px; background: #656565; border-radius: 4px; color: #ccc; }
.time-slider svg { width: 10px; height: 20px; }
.time-slider .thumb { width: 185px; color: #e8e8e8; }
.timeline { display: flex; height: 37px; border-top: 1px solid #111; border-bottom: 1px solid #555; }
.mini-curve { width: 75px; padding-right: 12px; }
.mini-curve svg { width: 24px; height: 20px; }
.frames { flex: 1; background: #2b2b2b; display: grid; grid-template-columns: repeat(20, 1fr); padding: 0 83px 0 7px; }
.step { display: grid; grid-template-columns: repeat(5, 1fr); position: relative; }
.step i { border-left: 1px solid #808080; height: 17px; }
.step i:first-child { height: 35px; }
.step span { position: absolute; left: -20px; top: 16px; width: 40px; text-align: center; font: 18px/16px "Liberation Serif", serif; color: #b4b4b4; }
.step:first-child::before { content: ""; position: absolute; left: -6px; top: 1px; width: 13px; height: 34px; background: #8a851c; border: 1px solid #555010; }
.step:first-child span { color: #e2dc3c; }

.status { display: flex; height: 81px; background: #444; }
.macro { width: 153px; padding: 4px 0 4px 4px; display: grid; grid-template-rows: 1fr 1fr; gap: 1px; }
.macro input { min-width: 0; width: 149px; background: #fff; border: 2px inset #ccc; padding: 0 4px 10px; font: 300 18px "Liberation Mono", "Noto Sans CJK SC", monospace; }
.macro input::placeholder { color: #888; opacity: 1; }
.macro .pink { background: #dcc4c6; }
.status-rows { flex: 1; border-left: 2px solid #222; margin-left: 4px; padding: 3px 0 0 4px; }
.status-row { display: flex; align-items: center; height: 38px; }
.status-row p { flex: 1; }
.status-row p span { font: 18px "Liberation Serif", serif; margin: 0 4px; }
.coords { display: flex; align-items: center; width: 666px; }
.coords button { width: 24px; margin-right: 16px; }
.coords button + button + button { margin-right: 10px; }
.coords button svg { width: 24px; height: 24px; }
.coords label { display: flex; align-items: center; gap: 5px; margin-right: 19px; font: 15px "Liberation Mono", monospace; }
.coords label input { width: 87px; height: 27px; background: #585858; border: 1px solid #4c4c4c; padding: 0 2px 4px; color: #8c8c8c; }
.grid-size { margin-left: 5px; }
.grid-size span { font: 16px "Liberation Mono", monospace; }
.tag { display: flex; align-items: center; width: 202px; gap: 5px; color: #c4c4c4; }
.tag button { width: 32px; height: 32px; background: #5d8ac6; border-radius: 5px; }
.tag svg { width: 24px; height: 24px; }
.playback { width: 698px; padding-top: 2px; }
.play-row { display: flex; align-items: center; height: 38px; }
.play-row + .play-row { height: 36px; }
.play-row button { position: relative; width: 24px; margin-right: 11px; }
.play-row button svg { width: 24px; height: 20px; }
.play-row .num { width: 105px; height: 26px; margin: 0 8px 0 0; }
.play-row .fly::after { bottom: -7px; right: -1px; }

.taskbar { display: flex; height: 60px; background: linear-gradient(90deg, #101010 0 600px, #0d1220 660px, #2a1f1d 800px, #261c1b 1200px, #0c1122 1480px); color: #fff; font-family: "Open Sans", "Noto Sans CJK SC", sans-serif; font-weight: 400; }
.start { width: 72px; }
.start svg { width: 26px; height: 26px; }
.search { width: 516px; background: #f2f2f2; display: flex; align-items: center; padding: 0 21px 0 13px; gap: 12px; }
.search > svg { width: 34px; height: 34px; }
.search .mic { width: 20px; height: 26px; }
.search input { flex: 1; min-width: 0; font-size: 22px; height: 40px; }
.search input::placeholder { color: #333; opacity: 1; }
.task-view { width: 71px; }
.task-view svg { width: 26px; height: 26px; }
.task { gap: 4px; justify-content: flex-start; font-size: 18px; }
.run { border-bottom: 4px solid #76b9ed; padding-top: 4px; }
.folder { margin-left: 12px; width: 228px; padding-left: 15px; gap: 12px; }
.folder svg { width: 22px; height: 32px; }
.mail { width: 89px; justify-content: center; }
.mail svg, .edge svg, .max svg { width: 36px; height: 36px; }
.edge { width: 228px; padding-left: 8px; gap: 3px; }
.max { width: 241px; margin-left: 8px; padding-left: 15px; background: linear-gradient(90deg, #544a47, #655c58 60%, #4c4e5c); }
.tray { padding: 3px 0 0 22px; font-size: 24px; }
.tray > div { display: flex; align-items: center; height: 26px; gap: 5px; }
.tray svg { width: 24px; height: 24px; }
.tray .dots { width: 20px; height: 20px; }
.ime { background: #fff; color: #111; font-size: 22px; line-height: 22px; }

/* site badge that floats over the page corner */
.brand { position: fixed; right: 0; bottom: 0; width: 533px; height: 266px; background: #fefefe; display: flex; align-items: center; padding: 0 0 2px 48px; color: #0a0a0a; }
.brand svg { width: 144px; height: 116px; }
.brand-text { display: flex; flex-direction: column; font-style: italic; white-space: nowrap; padding-bottom: 2px; }
.brand-text strong { font-size: 57px; line-height: 56px; font-weight: 900; }
.brand-text span { font: italic 600 37px/36px "Noto Sans", sans-serif; }
```

FILE: scene.js
```js
const NS = 'http://www.w3.org/2000/svg';

function add(parent, tag, attrs) {
  const el = document.createElementNS(NS, tag);
  for (const k in attrs) el.setAttribute(k, attrs[k]);
  parent.appendChild(el);
}

// Home grid: lines every 10 units around the world origin.
const STEP = 19.56, OX = 391, OY = 256;
document.querySelectorAll('.grid').forEach(g => {
  let d = '';
  for (let i = -20; i <= 21; i++) {
    const x = Math.round(OX + i * STEP) + 0.5;
    if (i && x > 0 && x < 783) d += `M${x} 0V514`;
    const y = Math.round(OY + i * STEP) + 0.5;
    if (i && y > 0 && y < 514) d += `M0 ${y}H783`;
  }
  add(g, 'path', { d });
  add(g, 'path', { d: `M${OX + 0.5} 0V514M0 ${OY + 0.5}H783`, class: 'origin' });
});

// Sphere wireframes with 32 segments.
const R = 74;
document.querySelectorAll('.wire').forEach(g => {
  const cx = +g.dataset.cx, cy = +g.dataset.cy;
  const top = g.closest('.viewport').dataset.view === 'top';
  let d = '';
  for (let k = 1; k <= 8; k++) {
    const s = R * Math.sin(k * Math.PI / 16), c = R * Math.cos(k * Math.PI / 16);
    if (top) {
      add(g, 'circle', { cx, cy, r: s });
    } else {
      add(g, 'ellipse', { cx, cy, rx: s, ry: R });
      d += `M${cx - s} ${cy - c}H${cx + s}M${cx - s} ${cy + c}H${cx + s}`;
    }
  }
  if (top) {
    for (let k = 0; k < 32; k++) {
      const a = k * Math.PI / 16;
      d += `M${cx} ${cy}L${cx + R * Math.cos(a)} ${cy + R * Math.sin(a)}`;
    }
  } else {
    d += `M${cx} ${cy - R}V${cy + R}`;
  }
  add(g, 'path', { d });
  add(g, 'circle', { cx, cy, r: R, class: 'outline' });
});

// Ground plane: unit square projected on the quad far-left, far-right, near-right, near-left.
const Q = [[173, 375], [648, 378], [792, 443], [-117, 431]];
function project(u, v) {
  const [[x0, y0], [x1, y1], [x2, y2], [x3, y3]] = Q;
  const dx1 = x1 - x2, dx2 = x3 - x2, dx3 = x0 - x1 + x2 - x3;
  const dy1 = y1 - y2, dy2 = y3 - y2, dy3 = y0 - y1 + y2 - y3;
  const det = dx1 * dy2 - dx2 * dy1;
  const g = (dx3 * dy2 - dx2 * dy3) / det, h = (dx1 * dy3 - dx3 * dy1) / det;
  const w = g * u + h * v + 1;
  return [((x1 - x0 + g * x1) * u + (x3 - x0 + h * x3) * v + x0) / w,
          ((y1 - y0 + g * y1) * u + (y3 - y0 + h * y3) * v + y0) / w];
}
document.querySelectorAll('.floor').forEach(g => {
  let d = '';
  for (let i = 0; i <= 14; i++) {
    const t = i / 14;
    d += `M${project(t, 0)}L${project(t, 1)}M${project(0, t)}L${project(1, t)}`;
  }
  add(g, 'path', { d });
});

// Track bar: a tick per frame, numbers up to where the badge begins.
const frames = document.querySelector('.frames');
for (let f = 0; f < 100; f += 5) {
  const step = document.createElement('div');
  step.className = 'step';
  step.innerHTML = '<i></i><i></i><i></i><i></i><i></i>' + (f <= 75 ? '<span>' + f + '</span>' : '');
  frames.appendChild(step);
}
```
